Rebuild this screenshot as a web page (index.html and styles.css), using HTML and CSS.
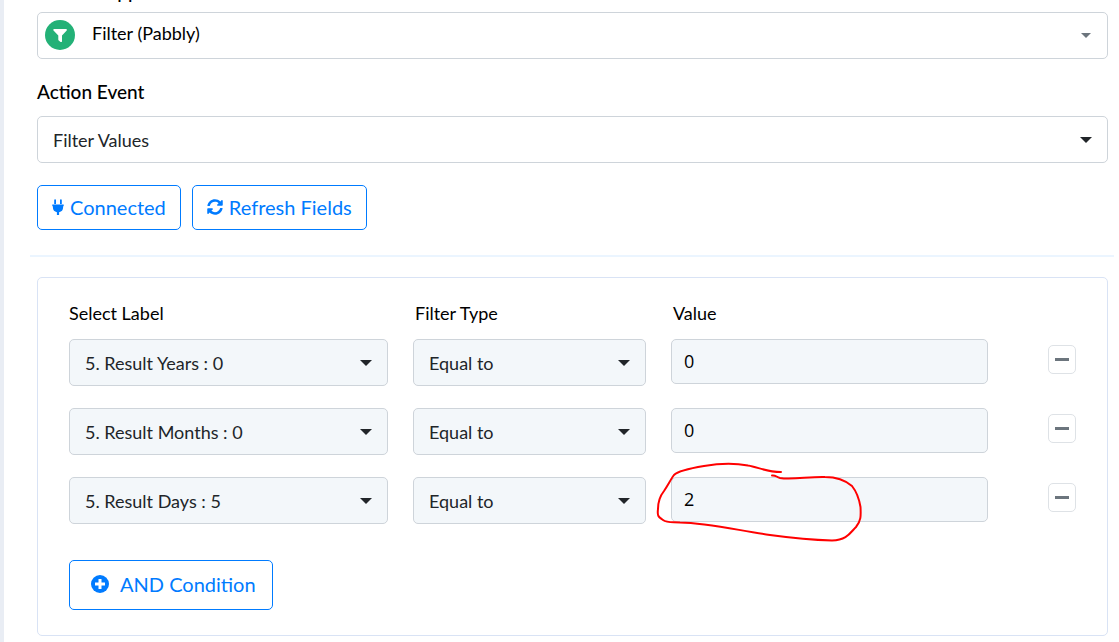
FILE: index.html
```html
<!DOCTYPE html>
<html lang="en">
<head>
    <meta charset="UTF-8">
    <meta name="viewport" content="width=device-width, initial-scale=1.0">
    <title>Filter (Pabbly)</title>
    <link rel="stylesheet" href="styles.css">
</head>
<body>
    <main class="step">
        <label class="step-label app-label" for="app">Choose App</label>
        <div class="select-box app-box">
            <svg class="app-icon" viewBox="0 0 30 30" aria-hidden="true">
                <circle cx="15" cy="15" r="15" fill="#23b177"/>
                <path d="M9.200 9h11.800c.9 0 1.200.9.7 1.500l-4.700 5.100v5.600c0 .8-.8 1.200-1.400.7l-1.900-1.500c-.3-.2-.4-.5-.4-.8v-4l-4.800-5.100C8 9.900 8.300 9 9.200 9z" fill="#fff"/>
            </svg>
            <select id="app">
                <option>Filter (Pabbly)</option>
            </select>
        </div>

        <label class="step-label" for="event">Action Event</label>
        <div class="select-box">
            <select id="event">
                <option>Filter Values</option>
            </select>
        </div>

        <div class="actions">
            <button type="button" class="btn">
                <svg width="12" height="16" viewBox="0 0 12 16" fill="currentColor" aria-hidden="true">
                    <path d="M2.200 1.200a.9.9 0 0 1 1.800 0V5H2.200zM8 1.200a.9.9 0 0 1 1.800 0V5H8zM.3 5.500h11.400v1.700h-.6v1.300a5 5 0 0 1-4 4.700V16H4.900v-2.800a5 5 0 0 1-4-4.700V7.200H.3z"/>
                </svg>
                Connected
            </button>
            <button type="button" class="btn">
                <svg width="16" height="16" viewBox="0 0 512 512" fill="currentColor" aria-hidden="true">
                    <path d="M370.7 133.300C339.500 104 298.900 88 255.800 88c-77.500.1-144.300 53.200-162.800 126.900-1.300 5.400-6.100 9.200-11.700 9.200H24.100c-7.500 0-13.200-6.800-11.800-14.200C33.900 94.900 134.800 8 256 8c66.400 0 126.800 26.100 171.300 68.700L463 41c15.100-15.100 41-4.400 41 17v134c0 13.300-10.700 24-24 24H346c-21.400 0-32.100-25.900-17-41l41.700-41.700zM32 296h134c21.400 0 32.100 25.900 17 41l-41.800 41.800c31.300 29.300 71.800 45.300 114.900 45.300 77.400-.1 144.300-53.100 162.800-126.800 1.300-5.400 6.100-9.200 11.700-9.200h57.300c7.500 0 13.200 6.800 11.800 14.200C478.100 417.100 377.200 504 256 504c-66.400 0-126.800-26.100-171.300-68.700L49 471c-15.100 15.100-41 4.400-41-17V320c0-13.300 10.700-24 24-24z"/>
                </svg>
                Refresh Fields
            </button>
        </div>

        <hr class="divider">

        <section class="filters">
            <div class="filter-row filter-head">
                <label for="label-1">Select Label</label>
                <label for="type-1">Filter Type</label>
                <label for="value-1">Value</label>
            </div>

            <div class="filter-row">
                <div class="select-box">
                    <select id="label-1"><option>5. Result Years : 0</option></select>
                </div>
                <div class="select-box">
                    <select id="type-1"><option>Equal to</option></select>
                </div>
                <div class="value-box">
                    <input type="text" id="value-1" value="0">
                </div>
                <button type="button" class="remove" aria-label="Remove condition"></button>
            </div>

            <div class="filter-row">
                <div class="select-box">
                    <select aria-label="Select Label"><option>5. Result Months : 0</option></select>
                </div>
                <div class="select-box">
                    <select aria-label="Filter Type"><option>Equal to</option></select>
                </div>
                <div class="value-box">
                    <input type="text" aria-label="Value" value="0">
                </div>
                <button type="button" class="remove" aria-label="Remove condition"></button>
            </div>

            <div class="filter-row">
                <div class="select-box">
                    <select aria-label="Select Label"><option>5. Result Days : 5</option></select>
                </div>
                <div class="select-box">
                    <select aria-label="Filter Type"><option>Equal to</option></select>
                </div>
                <div class="value-box">
                    <input type="text" aria-label="Value" value="2">
                    <svg class="marker" width="212" height="85" viewBox="0 0 212 85" aria-hidden="true">
                        <path d="M127 12C112 12 104 7 94 5.500C80 3 62 4 50 6C38 8 24 11 20 15C17 19 14 25 10 31C6 36 4 42 4 49C3 57 5 57 9 60C13 63 17 62 26 62.500C54 63 82 70 116 75C138 78 160 80 178 80.500C193 80 196 73 202 67C207 61 207 56 206.500 47C205 38 202 31 198 26C191 20 182 17 171 17C155 16.500 138 20 126 18C122 17 122 15 118 15.500"/>
                    </svg>
                </div>
                <button type="button" class="remove" aria-label="Remove condition"></button>
            </div>

            <button type="button" class="btn btn-add">
                <svg width="20" height="20" viewBox="0 0 20 20" aria-hidden="true">
                    <circle cx="10" cy="10" r="9" fill="currentColor"/>
                    <path d="M10 5v10M5 10h10" stroke="#fff" stroke-width="3"/>
                </svg>
                AND Condition
            </button>
        </section>
    </main>
</body>
</html>
```
FILE: styles.css
```css
* {
    box-sizing: border-box;
}
body {
    margin: 0;
    background: #fff;
    color: #000;
    font-family: Lato, "Liberation Sans", sans-serif;
    font-size: 18px;
    line-height: 24px;
    overflow: hidden;
}
button, input, select {
    font: inherit;
}
.step {
    border-left: 4px solid #e9edf4;
    padding: 0 11px 6px 33px;
}
.step-label {
    display: block;
    margin: 21px 0 12px;
    font-weight: 500;
    font-size: 19px;
}
.app-label {
    margin: -20px 0 8px;
}
.select-box {
    position: relative;
}
.select-box::after {
    content: "";
    position: absolute;
    top: 21px;
    right: 16px;
    border: 6px solid transparent;
    border-top-color: #212529;
    border-bottom: 0;
    pointer-events: none;
}
.select-box select {
    display: block;
    width: 100%;
    height: 47px;
    padding: 0 36px 0 15px;
    border: 1px solid #ced4da;
    border-radius: 5px;
    background: #fff;
    color: #212529;
    appearance: none;
}
.app-icon {
    position: absolute;
    top: 8px;
    left: 8px;
    width: 30px;
    height: 30px;
}
.app-box::after {
    border-width: 5px 5px 0;
    border-top-color: #6c757d;
    right: 17px;
}
.app-box select {
    padding: 0 36px 6px 54px;
    color: #000;
}
.actions {
    display: flex;
    gap: 11px;
    margin-top: 22px;
}
.btn {
    display: flex;
    align-items: center;
    gap: 6px;
    height: 45px;
    padding: 0 14px 2px;
    border: 1px solid #007bff;
    border-radius: 5px;
    background: #fff;
    color: #007bff;
    font-size: 20px;
    cursor: pointer;
}
.divider {
    height: 2px;
    margin: 25px -6px 20px -7px;
    border: 0;
    background: #ebf5ff;
}
.filters {
    padding: 23px 31px 25px;
    border: 1px solid #d9e3f5;
    border-radius: 5px;
}
.filter-row {
    display: grid;
    grid-template-columns: 319fr 233fr 317fr 63px;
    column-gap: 25px;
    margin-bottom: 22px;
}
.filter-head {
    margin-bottom: 14px;
}
.filter-head label + label {
    padding-left: 2px;
}
.filter-row select,
.filter-row input {
    background: #f3f7fa;
}
.value-box {
    position: relative;
}
.value-box input {
    display: block;
    width: 100%;
    height: 45px;
    padding: 0 12px 2px;
    border: 1px solid #ced4da;
    border-radius: 5px;
    color: #000;
    font-family: "Open Sans", "Noto Sans", sans-serif;
    font-weight: 500;
}
.marker {
    position: absolute;
    top: -17px;
    left: -17px;
    fill: none;
    stroke: #f00;
    stroke-width: 2;
    stroke-linecap: round;
    pointer-events: none;
}
.remove {
    display: grid;
    place-items: center;
    justify-self: end;
    width: 28px;
    height: 29px;
    margin-top: 6px;
    padding: 0;
    border: 1px solid #dee2e6;
    border-radius: 5px;
    background: #fff;
    cursor: pointer;
}
.remove::before {
    content: "";
    width: 14px;
    height: 3px;
    background: #6c757d;
}
.btn-add {
    gap: 10px;
    height: 50px;
    margin-top: 36px;
    padding: 0 16px 2px 20px;
}
```
